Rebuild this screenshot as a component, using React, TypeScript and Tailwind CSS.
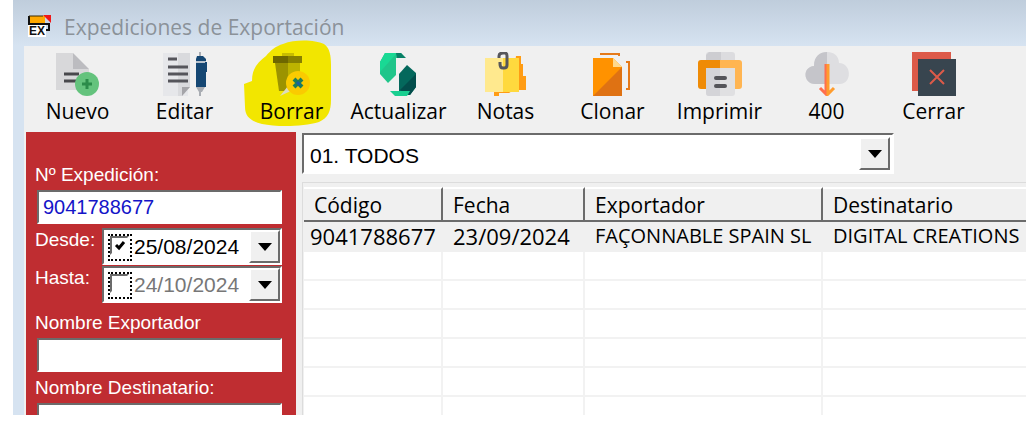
import { FC, ReactNode, useState } from "react";
import clsx from "clsx";

// Classic Windows bevels
const sunken = "border-2 border-t-[#6b6b6b] border-l-[#6b6b6b] border-r-white border-b-white bg-white";
const raised = "border-2 border-t-white border-l-white border-r-[#6b6b6b] border-b-[#6b6b6b] bg-[#f0f0f0]";

const AppIcon: FC = () => (
  <svg className="overflow-visible" width="24" height="26" viewBox="0 0 24 26" aria-hidden="true">
    <path d="M1 2h16v8H1z" fill="#ffa800" />
    <path d="M15 1h8v8z" fill="#f01818" />
    <path d="M1 2v8h20v6h-3" fill="none" stroke="#111" strokeWidth="2" />
    <path d="M1 2h14" stroke="#3a2a00" strokeWidth="1" />
    <rect x="0" y="11" width="18" height="12" fill="#fff" />
    <text x="1" y="21" fontFamily="Liberation Sans, sans-serif" fontSize="12" fontWeight="700" fill="#111">EX</text>
  </svg>
);

const NewIcon = (
  <>
    <path d="M0 1h17v16h16v21H0z" fill="#d8d8da" />
    <path d="M17 1l16 16H17z" fill="#bcbcc0" />
    <path d="M8 22h15M8 29h13" stroke="#48484c" strokeWidth="3" />
    <circle cx="31" cy="32" r="12" fill="#64c37d" />
    <path d="M31 27v10M26 32h10" stroke="#2b8c4a" strokeWidth="3" />
  </>
);

const EditIcon = (
  <>
    <path d="M0 1h25v43H0z" fill="#e6e7ea" />
    <path d="M15 1h12v34l-8 9h-4z" fill="#d9dadd" />
    <path d="M19 35h8l-8 9z" fill="#a5a5a9" />
    <path d="M5 7h9M5 15h20M5 22h20M5 29h20" stroke="#55555b" strokeWidth="3" />
    <path d="M37 0v44" stroke="#a9adb3" strokeWidth="2" />
    <path d="M33 35h9l-3 5h-3z" fill="#a9adb3" />
    <path d="M34 4h6l3 3v28H33V7z" fill="#154773" />
    <path d="M33 10h10" stroke="#b8c3ce" strokeWidth="2" />
    <path d="M43 10v10" stroke="#154773" strokeWidth="2" />
  </>
);

const DeleteIcon = (
  <>
    <path d="M12 5V1h12v4" fill="#c8bd00" />
    <path d="M3 4h15v7H3z" fill="#6e6700" />
    <path d="M18 4h14v7H18z" fill="#878000" />
    <path d="M5 11h13v25l-3 3H9z" fill="#9c9300" />
    <path d="M18 11h12v12L18 36z" fill="#bdb300" />
    <path d="M10 44l8-10 5 4z" fill="#dcdcc0" />
    <circle cx="28" cy="31" r="12" fill="#facb00" />
    <path d="M24 27l8 8M32 27l-8 8" stroke="#1c7d5a" strokeWidth="4" />
    <path d="M27 30l3 3" stroke="#1b5fa0" strokeWidth="3" />
  </>
);

const RefreshIcon = (
  <>
    <path d="M8 1h16l4 5h-9v17l-8 8-8-9V10z" fill="#20c58a" />
    <path d="M8 1h12L3 20V10z" fill="#19d994" />
    <path d="M19 1h5l5 5h-9z" fill="#078066" />
    <path d="M30 13l9 8v14l-6 8H22V22z" fill="#04685c" />
    <path d="M39 22v13l-6 8-10-5z" fill="#034d4b" />
    <path d="M13 39h20l-3 5H18z" fill="#19cf90" />
  </>
);

const NotesIcon = (
  <>
    <path d="M32 4h5v8h2v12h3v14H28zM10 38h20l-5 3H15v3h-5z" fill="#ff9c14" />
    <path d="M1 6h18v34H1z" fill="#ffe98e" />
    <path d="M19 6h16v34H19z" fill="#ffd93e" />
    <path d="M15 6V4q0-3 4-3h2q2 0 2 3v9q0 3-3 3h-1q-3 0-3-4v-2" fill="none" stroke="#56565b" strokeWidth="3" />
  </>
);

const CloneIcon = (
  <>
    <path d="M2 6h20l9 9v29H2z" fill="#ff9200" />
    <path d="M31 15v29H2l24-24z" fill="#df7213" />
    <path d="M22 6l9 9h-9z" fill="#ffd98c" />
    <path d="M9 2h19v2M35 10h3v27h-3" fill="none" stroke="#e57a1a" strokeWidth="2" />
  </>
);

const PrintIcon = (
  <>
    <rect x="8" y="0" width="29" height="14" rx="3" fill="#dcdcdf" />
    <path d="M11 0h12v12H8V3z" fill="#cdcdd1" />
    <path d="M3 8h20v29H3q-3 0-3-3V11q0-3 3-3z" fill="#ef8b06" />
    <path d="M22 8h19q3 0 3 3v23q0 3-3 3H22z" fill="#ffb552" />
    <path d="M8 16h29v25q0 3-3 3H11q-3 0-3-3z" fill="#e0e0e2" />
    <path d="M8 16h14v28H11q-3 0-3-3z" fill="#d4d4d8" />
    <path d="M18 26h9M18 34h9" stroke="#545459" strokeWidth="4" strokeLinecap="round" />
  </>
);

const CloudIcon = (
  <>
    <path d="M10 32C-2 32-3 15 9 14 9-4 34-4 34 11c13 0 13 21 1 21z" fill="#dedee1" />
    <path d="M10 32C-2 32-3 15 9 14 9 4 15 0 22 0v32z" fill="#c5c5ca" />
    <path d="M21 12v30l-6-6" fill="none" stroke="#ff6f4d" strokeWidth="3" />
    <path d="M23 12v30l6-6" fill="none" stroke="#ff9d2e" strokeWidth="3" />
  </>
);

const CloseIcon = (
  <>
    <path d="M0 0h39v39H0z" fill="#dc5a49" />
    <path d="M6 7h38v37H6z" fill="#38454f" />
    <path d="M18 18l14 14M32 18L18 32" stroke="#dc5a49" strokeWidth="2" />
  </>
);

type Tool = { label: string; icon: ReactNode; marked?: boolean };

const tools: Tool[] = [
  { label: "Nuevo", icon: NewIcon },
  { label: "Editar", icon: EditIcon },
  { label: "Borrar", icon: DeleteIcon, marked: true },
  { label: "Actualizar", icon: RefreshIcon },
  { label: "Notas", icon: NotesIcon },
  { label: "Clonar", icon: CloneIcon },
  { label: "Imprimir", icon: PrintIcon },
  { label: "400", icon: CloudIcon },
  { label: "Cerrar", icon: CloseIcon },
];

const ToolButton: FC<Tool> = ({ label, icon, marked }) => (
  <button type="button" className="relative flex w-[107px] shrink-0 flex-col items-center pt-1.5">
    {marked && (
      <svg className="absolute -top-1.5 left-1.5" width="88" height="88" viewBox="0 0 88 88" aria-hidden="true">
        <path d="M39 4C52-1 71 0 80 4c6 4 7 12 7 21v35c0 11-3 18-12 22-16 5-43 5-57 2C7 81 1 77 1 67L0 44l8-3c0-12 5-18 14-25C27 10 32 6 39 4z" fill="#f2e600" />
      </svg>
    )}
    <svg className="relative" width="44" height="44" viewBox="0 0 44 44" aria-hidden="true">{icon}</svg>
    <span className="relative text-[21px] leading-[30px]">{label}</span>
  </button>
);

const Arrow: FC = () => (
  <svg width="14" height="8" viewBox="0 0 14 8" aria-hidden="true">
    <path d="M0 0h14L7 8z" fill="#000" />
  </svg>
);

type TextFieldProps = { id: string; label: string; value?: string };

const TextField: FC<TextFieldProps> = ({ id, label, value = "" }) => (
  <div className="flex flex-col">
    <label htmlFor={id} className="h-[31px] text-[19px] leading-8 text-white">{label}</label>
    <input
      id={id}
      defaultValue={value}
      className={clsx(sunken, "ml-0.5 h-[34px] px-1 text-[20px] text-[#1414c8] outline-none")}
    />
  </div>
);

type DateFieldProps = { id: string; label: string; value: string; checked?: boolean };

const DateField: FC<DateFieldProps> = ({ id, label, value, checked = false }) => {
  const [active, setActive] = useState(checked);
  return (
    <div className="flex items-start">
      <label htmlFor={id} className="w-[67px] shrink-0 text-[19px] leading-6 text-white">{label}</label>
      <div className={clsx(sunken, "flex h-[37px] min-w-0 flex-1")}>
        <span className="relative my-1 ml-1 h-[27px] w-6 shrink-0 border-2 border-dotted border-black">
          <input
            type="checkbox"
            aria-label={"Activar " + label}
            checked={active}
            onChange={(e) => setActive(e.target.checked)}
            className={clsx(sunken, "block h-[19px] w-[19px] appearance-none")}
          />
          {active && (
            <svg className="pointer-events-none absolute top-1 left-1" width="12" height="12" viewBox="0 0 12 12" aria-hidden="true">
              <path d="M2 5l3 3 5-6" fill="none" stroke="#000" strokeWidth="3" />
            </svg>
          )}
        </span>
        <input
          id={id}
          defaultValue={value}
          className={clsx("min-w-0 flex-1 pl-0.5 text-[21px] outline-none", active ? "text-black" : "text-[#777]")}
        />
        <button type="button" aria-label={"Abrir " + label} className={clsx(raised, "flex w-[31px] shrink-0 items-center justify-center")}>
          <Arrow />
        </button>
      </div>
    </div>
  );
};

const columns = ["Código", "Fecha", "Exportador", "Destinatario"];

const Shipments: FC = () => (
  <table className="w-full table-fixed border-separate border-spacing-0 bg-white text-left">
    <colgroup>
      <col className="w-[139px]" />
      <col className="w-[142px]" />
      <col className="w-[238px]" />
      <col />
    </colgroup>
    <thead>
      <tr className="h-[35px] bg-[#f0f0f0] text-[21px] leading-7">
        {columns.map((name) => (
          <th key={name} className="border-t-2 border-r-2 border-b-2 border-t-white border-r-[#6b6b6b] border-b-[#6b6b6b] py-0 pl-2.5 font-normal last:border-r-0">
            {name}
          </th>
        ))}
      </tr>
    </thead>
    <tbody>
      <tr className="h-[29px] bg-[#f0f0f0] leading-7 whitespace-nowrap">
        <td className="border-r-2 border-b-2 border-[#f0f0f0] p-0 pl-1.5 text-[22px]">9041788677</td>
        <td className="border-r-2 border-b-2 border-[#f0f0f0] p-0 pl-2.5 text-[22px]">23/09/2024</td>
        <td className="border-r-2 border-b-2 border-[#f0f0f0] p-0 pl-2.5 text-[20px]">FAÇONNABLE SPAIN SL</td>
        <td className="border-b-2 border-[#f0f0f0] p-0 pl-2.5 text-[20px]">DIGITAL CREATIONS</td>
      </tr>
      {[1, 2, 3, 4, 5, 6].map((row) => (
        <tr key={row} className="h-[29px]">
          {columns.map((name) => (
            <td key={name} className="border-r-2 border-b-2 border-[#f2f2f2] p-0 last:border-r-0" />
          ))}
        </tr>
      ))}
    </tbody>
  </table>
);

export default function App() {
  return (
    <div className="h-screen overflow-hidden bg-white pb-1.5 pl-[13px] font-['Open_Sans',sans-serif] text-black">
      <div className="flex h-full flex-col overflow-hidden bg-[#d6e3f1]">
        <header className="flex h-[46px] shrink-0 items-center gap-3 bg-linear-to-b from-[#bfcddc] to-[#d6e3f1] pt-2 pl-[15px]">
          <AppIcon />
          <h1 className="text-[21px] leading-7 text-[#8b9299]">Expediciones de Exportación</h1>
        </header>
        <div className="ml-[11px] flex min-h-0 flex-1 flex-col bg-[#f0f0f0]">
          <nav className="flex h-[86px] shrink-0">
            {tools.map((tool) => (
              <ToolButton key={tool.label} {...tool} />
            ))}
          </nav>
          <div className="flex min-h-0 flex-1 overflow-hidden">
            <aside className="ml-0.5 flex w-[270px] shrink-0 flex-col overflow-hidden bg-[#bf2d31] pt-[27px] pr-3.5 pl-[9px] font-['Liberation_Sans',sans-serif]">
              <TextField id="expedicion" label="Nº Expedición:" value="9041788677" />
              <div className="mt-1 mb-1 flex flex-col gap-px">
                <DateField id="desde" label="Desde:" value="25/08/2024" checked />
                <DateField id="hasta" label="Hasta:" value="24/10/2024" />
              </div>
              <TextField id="exportador" label="Nombre Exportador" />
              <TextField id="destinatario" label="Nombre Destinatario:" />
            </aside>
            <main className="flex min-w-0 flex-1 flex-col pl-1.5">
              <div className={clsx(sunken, "relative mt-px h-[41px] w-[592px] max-w-full shrink-0")}>
                <select aria-label="Filtro" className="h-full w-full appearance-none px-1.5 pt-1 font-['Liberation_Sans',sans-serif] text-[21px] outline-none">
                  <option>01. TODOS</option>
                </select>
                <span className={clsx(raised, "pointer-events-none absolute inset-y-0.5 right-0.5 flex w-[31px] items-center justify-center")}>
                  <Arrow />
                </span>
              </div>
              <div className="mt-2 min-h-0 flex-1 overflow-hidden border-t border-l border-[#dcdcdc] pt-1 pl-px">
                <Shipments />
              </div>
            </main>
          </div>
        </div>
      </div>
    </div>
  );
}
